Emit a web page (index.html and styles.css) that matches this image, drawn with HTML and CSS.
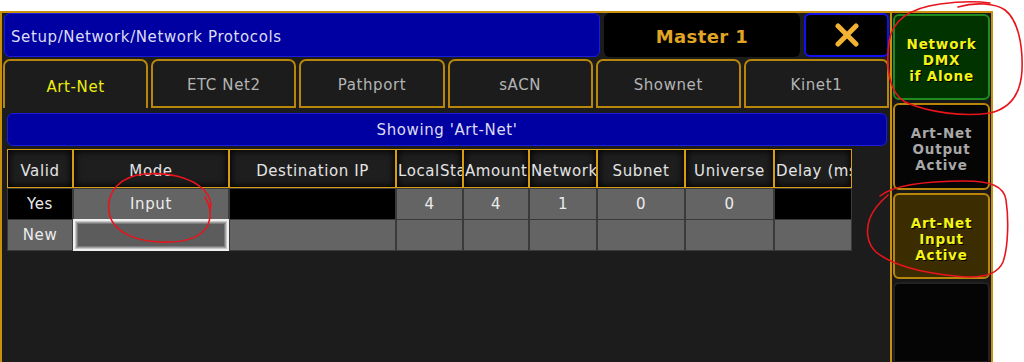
FILE: index.html
```html
<!DOCTYPE html>
<html>
<head>
<meta charset="utf-8">
<link rel="stylesheet" href="styles.css">
</head>
<body>
<div class="app">
  <div class="main">
    <div class="topbar">
      <div class="title">Setup/Network/Network Protocols</div>
      <div class="master">Master 1</div>
      <div class="close">
        <svg width="26" height="24" viewBox="0 0 26 24"><path d="M4 3 L22 21 M22 3 L4 21" stroke="#f2b233" stroke-width="5" stroke-linecap="round"/></svg>
      </div>
    </div>
    <div class="tabs">
      <div class="tab active">Art-Net</div>
      <div class="tab">ETC Net2</div>
      <div class="tab">Pathport</div>
      <div class="tab">sACN</div>
      <div class="tab">Shownet</div>
      <div class="tab">Kinet1</div>
    </div>
    <div class="content">
      <div class="showing">Showing 'Art-Net'</div>
      <div class="grid head">
        <div class="hc">Valid</div>
        <div class="hc">Mode</div>
        <div class="hc">Destination IP</div>
        <div class="hc">LocalStart</div>
        <div class="hc">Amount</div>
        <div class="hc">Network</div>
        <div class="hc">Subnet</div>
        <div class="hc">Universe</div>
        <div class="hc">Delay (ms)</div>
      </div>
      <div class="grid row">
        <div class="dc black">Yes</div>
        <div class="dc">Input</div>
        <div class="dc black"></div>
        <div class="dc">4</div>
        <div class="dc">4</div>
        <div class="dc">1</div>
        <div class="dc">0</div>
        <div class="dc">0</div>
        <div class="dc black"></div>
      </div>
      <div class="grid row">
        <div class="dc">New</div>
        <div class="dc selected"></div>
        <div class="dc"></div>
        <div class="dc"></div>
        <div class="dc"></div>
        <div class="dc"></div>
        <div class="dc"></div>
        <div class="dc"></div>
        <div class="dc"></div>
      </div>
    </div>
  </div>
  <div class="side">
    <div class="btn green">Network<br>DMX<br>if Alone</div>
    <div class="btn off">Art-Net<br>Output<br>Active</div>
    <div class="btn on">Art-Net<br>Input<br>Active</div>
    <div class="btn empty"></div>
  </div>
</div>
<svg class="annot" width="1024" height="362" viewBox="0 0 1024 362">
  <g fill="none" stroke="#e8141c" stroke-width="1.6" stroke-linecap="round">
    <path d="M958 7 C975 2 995 3 1005 10 C1018 20 1023 45 1022 70 C1021 92 1012 108 990 113 C965 117 930 113 905 102 C888 92 886 65 889 42 C892 20 910 8 940 4 C955 2 975 1 990 3"/>
    <path d="M205 197 C210 205 212 215 208 225 C202 237 185 243 160 242 C135 241 112 232 109 212 C106 192 120 176 145 174 C170 172 192 178 204 190 C210 196 212 203 210 210"/>
    <path d="M880 196 C895 184 930 181 965 181 C990 181 1004 186 1006 200 C1009 220 1008 248 1003 262 C997 276 980 279 955 276 C925 273 893 266 876 252 C866 243 866 228 870 218 C873 210 880 202 888 195"/>
  </g>
</svg>
</body>
</html>
```

FILE: styles.css
```css
* { box-sizing: border-box; }
body {
  margin: 0;
  background: #ffffff;
  font-family: "DejaVu Sans", sans-serif;
  position: relative;
  width: 1024px;
  height: 362px;
  overflow: hidden;
}
.app {
  display: flex;
  margin-top: 11px;
  height: 351px;
}
.main {
  width: 890px;
  background: #1c1c1c;
  border-top: 2px solid #c8900c;
  border-left: 2px solid #c8900c;
  display: flex;
  flex-direction: column;
}
.topbar {
  display: flex;
  height: 44px;
  gap: 4px;
  padding: 0 1px 0 2px;
}
.title {
  flex: 1;
  background: #0000a2;
  border: 1px solid #1c1cdc;
  border-radius: 6px;
  color: #dcdcf4;
  font-size: 15px;
  letter-spacing: 0.6px;
  display: flex;
  align-items: center;
  padding-left: 6px;
  padding-top: 3px;
}
.master {
  width: 196px;
  background: #000;
  border-radius: 6px;
  color: #e2a424;
  font-weight: bold;
  font-size: 18px;
  letter-spacing: 0.4px;
  display: flex;
  align-items: center;
  justify-content: center;
  padding-top: 3px;
}
.close {
  width: 85px;
  background: #000;
  border: 2px solid #1010f0;
  border-radius: 6px;
  display: flex;
  align-items: center;
  justify-content: center;
}
.tabs {
  display: flex;
  gap: 3px;
  margin-top: 2px;
  padding: 0 1px 0 1px;
  height: 49px;
}
.tab {
  flex: 1;
  border: 2px solid #b8860b;
  border-radius: 7px 7px 0 0;
  background: #1c1c1c;
  color: #b4b4b4;
  font-size: 15px;
  letter-spacing: 0.6px;
  display: flex;
  align-items: center;
  justify-content: center;
  padding-top: 2px;
}
.tab.active {
  border-bottom: none;
  color: #ecec10;
  padding-top: 4px;
}
.content {
  flex: 1;
  padding: 5px 3px 0 5px;
}
.showing {
  height: 33px;
  background: #0000a2;
  border: 1px solid #1c1cdc;
  border-radius: 6px;
  color: #dcdcf4;
  font-size: 15px;
  letter-spacing: 0.6px;
  display: flex;
  align-items: center;
  justify-content: center;
}
.grid {
  display: grid;
  grid-template-columns: 66px 156px 167px 67px 66px 68px 88px 89px 78px;
  width: 845px;
}
.head {
  margin-top: 3px;
  height: 39px;
}
.hc {
  border: 1px solid #d89c10;
  background: #1e1e1e;
  box-shadow: inset 0 0 7px 1px #000;
  color: #e4e4e4;
  font-size: 15px;
  letter-spacing: 0.6px;
  text-align: center;
  line-height: 37px;
  padding-top: 3px;
  white-space: nowrap;
  overflow: hidden;
  padding-left: 1px;
  padding-right: 1px;
}
.row {
  height: 31px;
}
.dc {
  border: 1px solid #3a3a3a;
  background: #646464;
  color: #ececec;
  font-size: 15px;
  letter-spacing: 0.6px;
  text-align: center;
  line-height: 30px;
}
.dc.black {
  background: #000;
}
.dc.selected {
  border: 2px solid #f0f0f0;
  box-shadow: inset 0 0 0 1px #c8c8c8, inset 0 0 0 2px #a0a0a0, inset 0 0 0 3px #7c7c7c;
  background: #5c5c5c;
}
.side {
  width: 103px;
  border: 2px solid #c8900c;
  border-bottom: none;
  background: #181818;
  padding: 1px;
  display: flex;
  flex-direction: column;
  gap: 3px;
}
.btn {
  border: 2px solid #b8860b;
  border-radius: 6px;
  background: #050505;
  font-weight: bold;
  font-size: 13.5px;
  letter-spacing: 0.8px;
  line-height: 16px;
  text-align: center;
  display: flex;
  align-items: center;
  justify-content: center;
  text-shadow: 1px 1px 0 #000;
  padding-top: 5px;
}
.btn.green {
  height: 86px;
  background: #003300;
  border-color: #1f8c1f;
  color: #f4f414;
}
.btn.off {
  height: 87px;
  color: #a8a8a8;
}
.btn.on {
  height: 86px;
  background: #3c2c02;
  color: #f4f414;
}
.btn.empty {
  flex: 1;
  border-color: #222;
  border-bottom: none;
  border-radius: 6px 6px 0 0;
}
.annot {
  position: absolute;
  top: 0;
  left: 0;
  pointer-events: none;
}
```
